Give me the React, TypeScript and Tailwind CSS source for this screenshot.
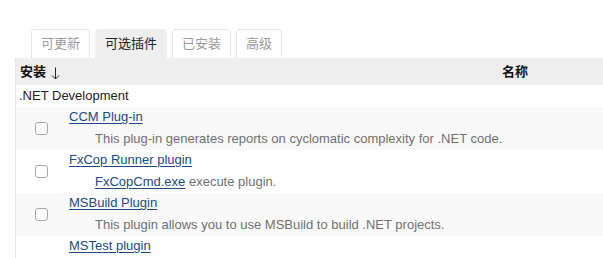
import React from "react";

const font = { fontFamily: '"Liberation Sans", Arial, "Noto Sans CJK SC", sans-serif' };

function Tab({ label, active }: { label: string; active?: boolean }) {
  return (
    <div
      className={
        "h-[29px] px-[9px] flex items-center rounded-t-[4px] border border-b-0 text-[13px] " +
        (active
          ? "bg-[#eeeeee] border-[#eeeeee] text-[#222]"
          : "bg-white border-[#e6e6e6] text-[#9a9a9a]")
      }
    >
      {label}
    </div>
  );
}

function PluginRow({
  name,
  desc,
  shaded,
}: {
  name: string;
  desc?: React.ReactNode;
  shaded?: boolean;
}) {
  return (
    <div className={"flex h-[43px] overflow-hidden " + (shaded ? "bg-[#f9f9f9]" : "bg-white")}>
      <div className="w-[50px] flex items-center justify-center">
        {desc !== undefined && (
          <div className="w-[13px] h-[13px] rounded-[3px] border border-[#a8a8a8] bg-white" />
        )}
      </div>
      <div className="flex flex-col pl-[3px]">
        <a className="h-5 leading-5 text-[13px] text-[#204a87] underline underline-offset-[2px]">
          {name}
        </a>
        {desc !== undefined && (
          <div className="mt-[2px] h-5 leading-5 pl-[26px] text-[13px] text-[#707070]">{desc}</div>
        )}
      </div>
    </div>
  );
}

export default function App() {
  return (
    <div className="w-[603px] h-[258px] overflow-hidden bg-white text-[#222]" style={font}>
      <div className="pl-[15px] pt-[29px]">
        <div className="flex gap-[5px] pl-[16px]">
          <Tab label="可更新" />
          <Tab label="可选插件" active />
          <Tab label="已安装" />
          <Tab label="高级" />
        </div>
        <div className="border-l border-[#e4e4e4]">
          <div className="flex h-[27px] items-center bg-[#eeeeee] text-[13px] font-bold text-[#111]">
            <div className="w-[50px] pl-[4px] whitespace-nowrap flex items-center">
              安装
              <svg width="9" height="13" viewBox="0 0 9 13" className="ml-[5px] mt-[3px]">
                <path d="M4.5 0.5 V12 M1 8.5 L4.5 12 L8 8.5" stroke="#222" strokeWidth="1" fill="none" />
              </svg>
            </div>
            <div className="pl-[436px]">名称</div>
          </div>
          <div className="h-[22px] flex items-center pl-[3px] text-[13px] text-[#222] bg-white">
            .NET Development
          </div>
          <PluginRow
            shaded
            name="CCM Plug-in"
            desc="This plug-in generates reports on cyclomatic complexity for .NET code."
          />
          <PluginRow
            name="FxCop Runner plugin"
            desc={
              <>
                <a className="text-[#204a87] underline underline-offset-[2px]">FxCopCmd.exe</a> execute
                plugin.
              </>
            }
          />
          <PluginRow
            shaded
            name="MSBuild Plugin"
            desc="This plugin allows you to use MSBuild to build .NET projects."
          />
          <PluginRow name="MSTest plugin" />
        </div>
      </div>
    </div>
  );
}
